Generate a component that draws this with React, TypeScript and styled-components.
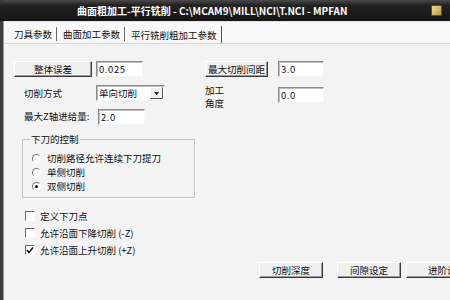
import styled, { createGlobalStyle } from 'styled-components'

const GlobalStyle = createGlobalStyle`
  html, body {
    margin: 0;
    padding: 0;
    background: #f3f3f3;
  }
  body {
    font-family: "Noto Sans CJK SC", "Liberation Sans", sans-serif;
    font-size: 9.5px;
    color: #111;
  }
`

const Window = styled.div`
  width: 450px;
  height: 300px;
  overflow: hidden;
  display: flex;
  flex-direction: column;
  background: #3a3a3a;
`

const TitleBar = styled.div`
  flex: none;
  height: 21px;
  display: flex;
  align-items: center;
  padding-left: 77px;
  background: linear-gradient(#4a4a4a, #222 25%, #151515);
  border-radius: 5px 0 0 0;
`

const Title = styled.span`
  color: #fff;
  font-weight: 700;
  font-size: 10px;
  white-space: nowrap;
`

const TitleIcon = styled.span`
  margin-left: auto;
  margin-right: 8px;
  width: 9px;
  height: 9px;
  background: linear-gradient(135deg, #f2dc94, #b8973e);
  border: 1px solid #5e4c1a;
`

const Body = styled.div`
  flex: 1;
  display: flex;
  min-height: 0;
`

const LeftEdge = styled.div`
  width: 3px;
  flex: none;
  background: #3c3c3c;
  border-right: 1px solid #9a9a9a;
`

const Content = styled.div`
  flex: 1;
  display: flex;
  flex-direction: column;
  background: #f3f3f3;
  min-width: 0;
`

const TabStrip = styled.div`
  height: 21px;
  flex: none;
  display: flex;
  align-items: center;
  padding-left: 9px;
  background: #f8f8f8;
  border-top: 1px solid #e2e2e2;
  border-bottom: 1px solid #d6d6d6;
`

const Tab = styled.div<{ $active?: boolean }>`
  display: flex;
  align-items: center;
  height: ${p => (p.$active ? '17px' : '14px')};
  padding: 0 4px 0 1px;
  margin-right: 5px;
  border-right: 1px solid ${p => (p.$active ? '#555' : '#6a6a6a')};
  align-self: ${p => (p.$active ? 'flex-end' : 'center')};
  margin-top: ${p => (p.$active ? '0' : '2px')};
`

const Panel = styled.div`
  display: flex;
  flex-direction: column;
  padding: 17px 0 0 10px;
`

const Row = styled.div<{ $top?: number; $h?: number }>`
  display: flex;
  align-items: flex-start;
  height: ${p => (p.$h ? `${p.$h}px` : 'auto')};
  margin-top: ${p => p.$top ?? 0}px;
  white-space: nowrap;
`

const Button = styled.div<{ $w: number; $left?: number }>`
  width: ${p => p.$w}px;
  height: 16px;
  flex: none;
  box-sizing: border-box;
  margin-left: ${p => p.$left ?? 0}px;
  display: flex;
  align-items: center;
  justify-content: center;
  background: #efefef;
  border: 1px solid;
  border-color: #fff #3a3a3a #3a3a3a #fff;
  box-shadow: inset -1px -1px 0 #9a9a9a;
`

const Input = styled.div<{ $w: number; $left?: number; $top?: number }>`
  width: ${p => p.$w}px;
  height: 16px;
  flex: none;
  box-sizing: border-box;
  margin-left: ${p => p.$left ?? 0}px;
  margin-top: ${p => p.$top ?? 0}px;
  display: flex;
  align-items: center;
  padding-left: 2px;
  background: #fff;
  border: 1px solid;
  border-color: #8a8a8a #f6f6f6 #f6f6f6 #8a8a8a;
  box-shadow: inset 1px 1px 0 #bdbdbd;
  letter-spacing: 0.6px;
`

const Label = styled.div<{ $w: number; $pad?: number; $top?: number }>`
  width: ${p => p.$w}px;
  flex: none;
  box-sizing: border-box;
  padding-left: ${p => p.$pad ?? 0}px;
  margin-top: ${p => p.$top ?? 0}px;
  line-height: 13px;
`

const Select = styled.div`
  width: 69px;
  height: 16px;
  flex: none;
  box-sizing: border-box;
  display: flex;
  align-items: center;
  padding-left: 2px;
  background: #fff;
  border: 1px solid;
  border-color: #8a8a8a #f6f6f6 #f6f6f6 #8a8a8a;
  box-shadow: inset 1px 1px 0 #bdbdbd;
`

const SelectText = styled.span`
  flex: 1;
`

const DropButton = styled.div`
  width: 13px;
  height: 12px;
  margin-right: 1px;
  box-sizing: border-box;
  display: flex;
  align-items: center;
  justify-content: center;
  background: #efefef;
  border: 1px solid;
  border-color: #fff #555 #555 #fff;
`

const Group = styled.fieldset`
  width: 173px;
  box-sizing: border-box;
  margin: 8px 0 0 8px;
  padding: 6px 0 4px 9px;
  border: 1px solid #c4c4c4;
  box-shadow: 1px 1px 0 #fff;
`

const Legend = styled.legend`
  margin-left: -2px;
  padding: 0 1px;
  line-height: 12px;
`

const OptionRow = styled.div<{ $h: number }>`
  display: flex;
  align-items: center;
  height: ${p => p.$h}px;
  white-space: nowrap;
`

const Radio = styled.span<{ $checked?: boolean }>`
  width: 7px;
  height: 7px;
  flex: none;
  margin-right: 6px;
  border-radius: 50%;
  background: #fff;
  border: 1px solid;
  border-color: #7a7a7a #fff #fff #7a7a7a;
  display: flex;
  align-items: center;
  justify-content: center;
  &::after {
    content: '';
    width: 3px;
    height: 3px;
    border-radius: 50%;
    background: ${p => (p.$checked ? '#111' : 'transparent')};
  }
`

const CheckList = styled.div`
  display: flex;
  flex-direction: column;
  margin: 9px 0 0 11px;
`

const Check = styled.span`
  width: 8px;
  height: 8px;
  flex: none;
  margin-right: 5px;
  background: #fff;
  border: 1px solid;
  border-color: #6a6a6a #fff #fff #6a6a6a;
  display: flex;
  align-items: center;
  justify-content: center;
`

const ButtonBar = styled.div`
  display: flex;
  margin: 4px 0 0 245px;
`

const CheckMark = () => (
  <svg width="8" height="8" viewBox="0 0 8 8">
    <polyline points="1,4 3,6.5 7,1.5" fill="none" stroke="#111" strokeWidth="1.5" />
  </svg>
)

const Arrow = () => (
  <svg width="5" height="3" viewBox="0 0 5 3">
    <polygon points="0,0 5,0 2.5,3" fill="#111" />
  </svg>
)

export default function App() {
  return (
    <>
      <GlobalStyle />
      <Window>
        <TitleBar>
          <Title>曲面粗加工-平行铣削 - C:\MCAM9\MILL\NCI\T.NCI - MPFAN</Title>
          <TitleIcon />
        </TitleBar>
        <Body>
          <LeftEdge />
          <Content>
            <TabStrip>
              <Tab>刀具参数</Tab>
              <Tab>曲面加工参数</Tab>
              <Tab $active>平行铣削粗加工参数</Tab>
            </TabStrip>
            <Panel>
              <Row>
                <Button $w={78}>整体误差</Button>
                <Input $w={47} $left={4}>0.025</Input>
                <Button $w={63} $left={62}>最大切削间距</Button>
                <Input $w={46} $left={10}>3.0</Input>
              </Row>
              <Row $top={8} $h={18}>
                <Label $w={82} $pad={10} $top={2}>切削方式</Label>
                <Select>
                  <SelectText>单向切削</SelectText>
                  <DropButton><Arrow /></DropButton>
                </Select>
                <Label $w={113} $pad={40} $top={-1}>加工<br />角度</Label>
                <Input $w={46} $top={2}>0.0</Input>
              </Row>
              <Row $top={6}>
                <Label $w={84} $pad={10} $top={1}>最大Z轴进给量:</Label>
                <Input $w={47}>2.0</Input>
              </Row>
              <Group>
                <Legend>下刀的控制</Legend>
                <OptionRow $h={14}><Radio />切削路径允许连续下刀提刀</OptionRow>
                <OptionRow $h={14}><Radio />单侧切削</OptionRow>
                <OptionRow $h={14}><Radio $checked />双侧切削</OptionRow>
              </Group>
              <CheckList>
                <OptionRow $h={17}><Check />定义下刀点</OptionRow>
                <OptionRow $h={17}><Check />允许沿面下降切削 (-Z)</OptionRow>
                <OptionRow $h={17}><Check><CheckMark /></Check>允许沿面上升切削 (+Z)</OptionRow>
              </CheckList>
              <ButtonBar>
                <Button $w={64}>切削深度</Button>
                <Button $w={64} $left={14}>间隙设定</Button>
                <Button $w={82} $left={5}>进阶设定</Button>
              </ButtonBar>
            </Panel>
          </Content>
        </Body>
      </Window>
    </>
  )
}
